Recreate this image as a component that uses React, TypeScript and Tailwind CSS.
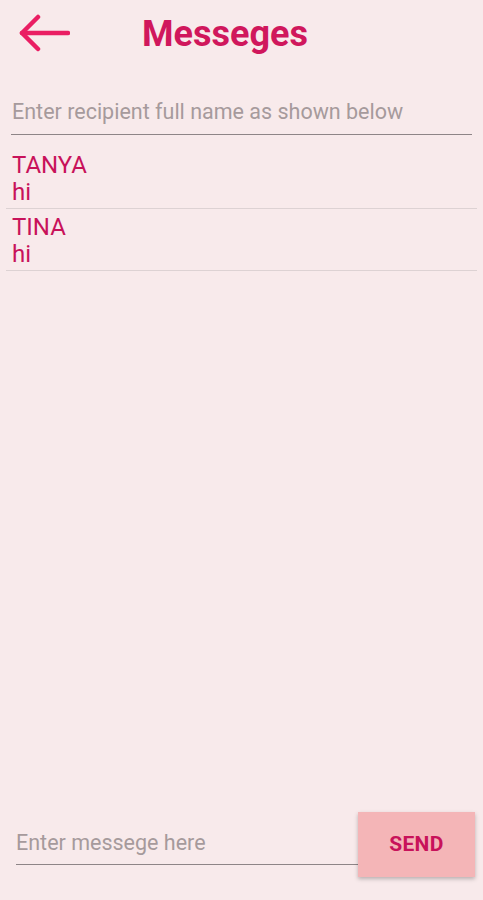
import React from 'react';

const contacts = [
  { name: 'TANYA', last: 'hi' },
  { name: 'TINA', last: 'hi' },
];

const App: React.FC = () => {
  return (
    <div className="h-[900px] w-full bg-[#f8eaeb] flex flex-col font-['Roboto',sans-serif]">
      <div className="flex items-center h-[68px] pl-[18px]">
        <svg width="52" height="40" viewBox="0 0 52 40" fill="none" stroke="#ea1e63" strokeWidth="4.5" strokeLinecap="round" strokeLinejoin="round">
          <path d="M50 19H4" />
          <path d="M20 3L4 19l16 16" />
        </svg>
        <h1 className="ml-[72px] text-[36px] font-bold text-[#d0175c] leading-none">Messeges</h1>
      </div>

      <div className="px-[11px] mt-[28px]">
        <input
          className="w-full bg-transparent outline-none border-b-[1.5px] border-[#8e8587] pb-[6px] pl-[1px] text-[21.5px] leading-[32px] text-[#5a4e50] placeholder:text-[#a69a9c]"
          placeholder="Enter recipient full name as shown below"
        />
      </div>

      <div className="px-[6px] mt-[12px]">
        {contacts.map((c) => (
          <div key={c.name} className="border-b-[1.5px] border-[#ddd2d3] pl-[6px] pt-[5px] pb-[2px]">
            <div className="text-[24px] leading-[27px] text-[#c8125a]">{c.name}</div>
            <div className="text-[24px] leading-[27px] text-[#c8125a]">{c.last}</div>
          </div>
        ))}
      </div>

      <div className="flex-1" />

      <div className="relative flex items-end h-[65px] mb-[23px] pl-[16px]">
        <input
          className="w-[394px] bg-transparent outline-none border-b-[1.5px] border-[#8e8587] pb-[5px] mb-[12px] text-[21.5px] leading-[32px] text-[#5a4e50] placeholder:text-[#a69a9c]"
          placeholder="Enter messege here"
        />
        <button className="absolute right-[8px] top-0 h-[65px] w-[117px] bg-[#f4b5b7] shadow-[0_2px_4px_rgba(0,0,0,0.25)] text-[21px] font-bold text-[#c8125a] tracking-[0.3px]">
          SEND
        </button>
      </div>
    </div>
  );
};

export default App;
